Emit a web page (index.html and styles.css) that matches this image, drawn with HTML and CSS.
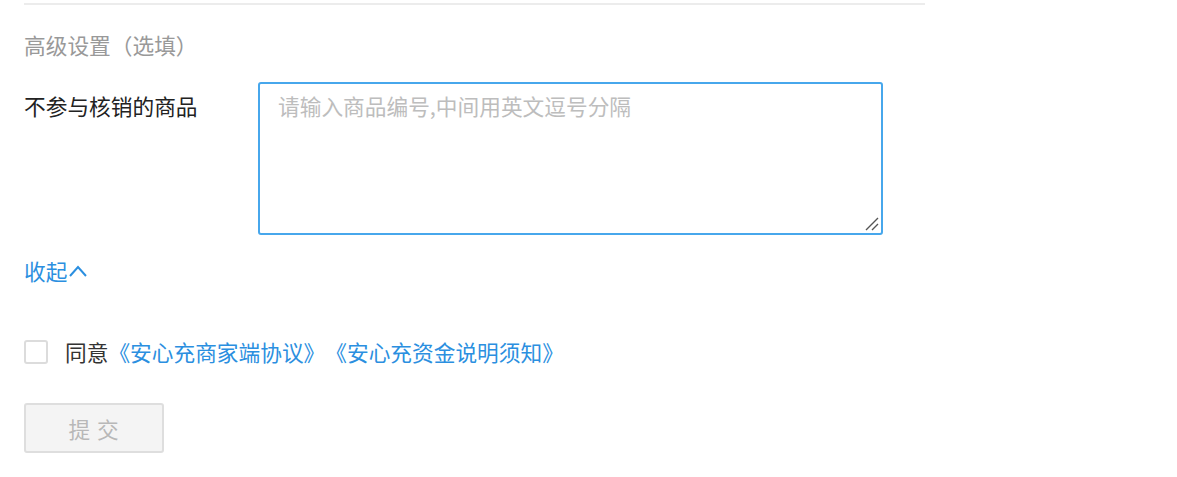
FILE: index.html
```html
<!DOCTYPE html>
<html lang="zh">
<head>
<meta charset="utf-8">
<link rel="stylesheet" href="styles.css">
</head>
<body>
<div class="page">
  <div class="divider"></div>
  <div class="section-title">高级设置（选填）</div>
  <div class="form-row">
    <label class="form-label">不参与核销的商品</label>
    <div class="textarea-wrap">
      <textarea class="form-textarea" placeholder="请输入商品编号,中间用英文逗号分隔"></textarea>
      <svg class="grip" width="16" height="16" viewBox="0 0 16 16"><path d="M2 14 L14 2 M8 14 L14 8" stroke="#555" stroke-width="1.4" fill="none"/></svg>
    </div>
  </div>
  <a class="collapse-link">收起<svg class="chev" width="20" height="14" viewBox="0 0 20 14"><path d="M2 12 L10 3 L18 12" fill="none" stroke="currentColor" stroke-width="2"/></svg></a>
  <div class="agree-row">
    <span class="checkbox"></span>
    <span class="agree-text">同意</span><a class="agree-link">《安心充商家端协议》</a><a class="agree-link">《安心充资金说明须知》</a>
  </div>
  <button class="submit-btn">提 交</button>
</div>
</body>
</html>
```
FILE: styles.css
```css
* { box-sizing: border-box; }
body {
  margin: 0;
  background: #fff;
  font-family: "Noto Sans CJK SC", "Noto Sans", sans-serif;
}
.page {
  padding: 0 24px;
  width: 925px;
}
.divider {
  height: 2px;
  margin-top: 3px;
  background: #ececec;
  width: 901px;
}
.section-title {
  margin-top: 24px;
  font-size: 21.7px;
  line-height: 32px;
  color: #999;
}
.form-row {
  display: flex;
  margin-top: 21px;
}
.form-label {
  width: 234px;
  font-size: 21.7px;
  line-height: 32px;
  color: #222;
  padding-top: 8px;
}
.textarea-wrap {
  position: relative;
  width: 625px;
  height: 153px;
}
.form-textarea {
  display: block;
  width: 100%;
  height: 100%;
  border: 2px solid #47a7ec;
  border-radius: 3px;
  padding: 7px 18px;
  font-family: "Noto Sans CJK SC", "Noto Sans", sans-serif;
  font-size: 21.7px;
  line-height: 30px;
  color: #333;
  outline: none;
  resize: none;
}
.form-textarea::placeholder { color: #bdbdbd; }
.grip {
  position: absolute;
  right: 3px;
  bottom: 3px;
}
.collapse-link {
  display: flex;
  align-items: center;
  margin-top: 20px;
  font-size: 21.7px;
  line-height: 32px;
  color: #2b8fe0;
}
.chev { margin-left: 1px; }
.agree-row {
  display: flex;
  align-items: center;
  margin-top: 49px;
  font-size: 21.7px;
  line-height: 32px;
}
.checkbox {
  width: 24px;
  height: 24px;
  border: 2px solid #dcdcdc;
  border-radius: 3px;
  margin-right: 17px;
  background: #fff;
}
.agree-text { color: #333; }
.agree-link { color: #2b8fe0; }
.submit-btn {
  display: block;
  margin-top: 35px;
  width: 140px;
  height: 50px;
  background: #f4f4f4;
  border: 2px solid #dedede;
  border-radius: 3px;
  color: #b8b8b8;
  font-family: "Noto Sans CJK SC", "Noto Sans", sans-serif;
  font-size: 21.7px;
  letter-spacing: 1px;
  padding: 0;
}
```
